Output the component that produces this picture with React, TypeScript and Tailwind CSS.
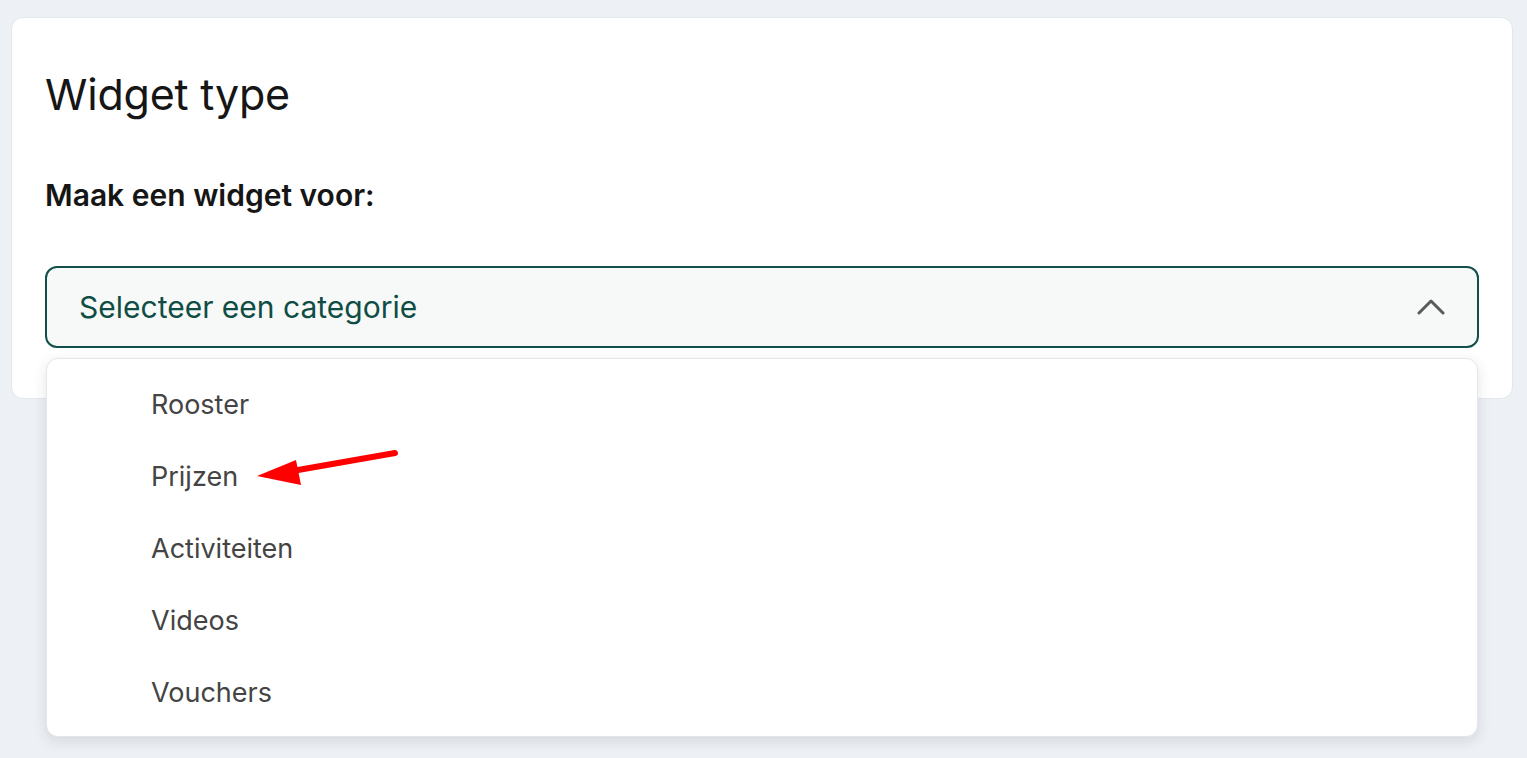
import React from "react";

export default function App() {
  const items = ["Rooster", "Prijzen", "Activiteiten", "Videos", "Vouchers"];
  return (
    <div
      className="w-[1527px] h-[758px] bg-[#edf0f5] pt-[17px] pl-[11px] overflow-hidden"
      style={{ fontFamily: "Inter, 'Noto Sans', sans-serif" }}
    >
      <div className="relative w-[1502px] h-[382px] bg-white border border-[#e3e6eb] rounded-[12px] px-[33px] pt-[50px]">
        <h1 className="text-[43px] leading-[52px] text-[#161616] font-normal tracking-[-0.2px]">Widget type</h1>
        <p className="mt-[58px] text-[30px] leading-[34px] font-semibold text-[#161616]">Maak een widget voor:</p>
        <div className="relative mt-[54px]">
          <div className="h-[82px] rounded-[12px] border-2 border-[#11504a] bg-[#f7f9f8] flex items-center justify-between pl-[32px] pr-[32px]">
            <span className="text-[30px] text-[#0f4d44]">Selecteer een categorie</span>
            <svg width="28" height="18" viewBox="0 0 28 18" fill="none">
              <path d="M2 15 L14 3 L26 15" stroke="#5a5a5a" strokeWidth="3" strokeLinecap="round" strokeLinejoin="round" />
            </svg>
          </div>
          <div className="absolute left-[1px] top-[92px] w-[1432px] bg-white rounded-[12px] border border-[#e4e6ea] shadow-[0_4px_14px_rgba(30,40,60,0.12)] pt-[10px] pb-[7px] z-10">
            {items.map((it) => (
              <div key={it} className="h-[72px] flex items-center pl-[104px] text-[27px] text-[#444444]">
                {it}
              </div>
            ))}
            <svg className="absolute left-[153px] top-[79px]" width="210" height="50" viewBox="200 439 210 50" fill="none">
              <path d="M395 454 L298 471" stroke="#ff0000" strokeWidth="6" strokeLinecap="round" />
              <path d="M257 477 L296 461 L301 486 Z" fill="#ff0000" />
            </svg>
          </div>
        </div>
      </div>
    </div>
  );
}
